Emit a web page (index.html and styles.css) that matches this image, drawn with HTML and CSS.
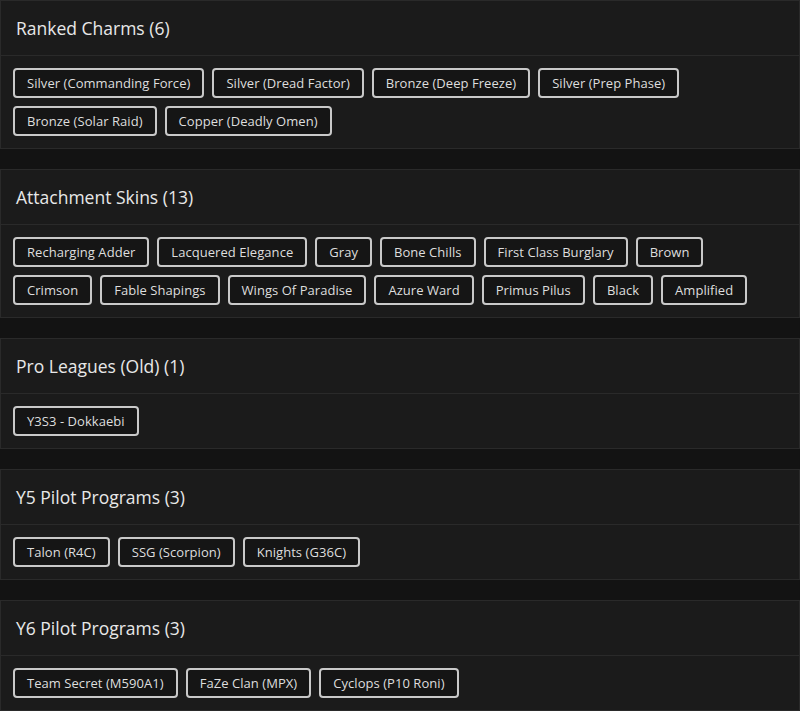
FILE: index.html
```html
<!DOCTYPE html>
<html lang="en">
<head>
<meta charset="utf-8">
<title>Collection</title>
<link rel="stylesheet" href="styles.css">
</head>
<body>
<div class="list">
  <section class="card">
    <h2 class="card-title">Ranked Charms (6)</h2>
    <div class="card-body">
      <span class="tag">Silver (Commanding Force)</span>
      <span class="tag">Silver (Dread Factor)</span>
      <span class="tag">Bronze (Deep Freeze)</span>
      <span class="tag">Silver (Prep Phase)</span>
      <span class="tag">Bronze (Solar Raid)</span>
      <span class="tag">Copper (Deadly Omen)</span>
    </div>
  </section>
  <section class="card">
    <h2 class="card-title">Attachment Skins (13)</h2>
    <div class="card-body">
      <span class="tag">Recharging Adder</span>
      <span class="tag">Lacquered Elegance</span>
      <span class="tag">Gray</span>
      <span class="tag">Bone Chills</span>
      <span class="tag">First Class Burglary</span>
      <span class="tag">Brown</span>
      <span class="tag">Crimson</span>
      <span class="tag">Fable Shapings</span>
      <span class="tag">Wings Of Paradise</span>
      <span class="tag">Azure Ward</span>
      <span class="tag">Primus Pilus</span>
      <span class="tag">Black</span>
      <span class="tag">Amplified</span>
    </div>
  </section>
  <section class="card">
    <h2 class="card-title">Pro Leagues (Old) (1)</h2>
    <div class="card-body">
      <span class="tag">Y3S3 - Dokkaebi</span>
    </div>
  </section>
  <section class="card">
    <h2 class="card-title">Y5 Pilot Programs (3)</h2>
    <div class="card-body">
      <span class="tag">Talon (R4C)</span>
      <span class="tag">SSG (Scorpion)</span>
      <span class="tag">Knights (G36C)</span>
    </div>
  </section>
  <section class="card">
    <h2 class="card-title">Y6 Pilot Programs (3)</h2>
    <div class="card-body">
      <span class="tag">Team Secret (M590A1)</span>
      <span class="tag">FaZe Clan (MPX)</span>
      <span class="tag">Cyclops (P10 Roni)</span>
    </div>
  </section>
</div>
</body>
</html>
```

FILE: styles.css
```css
html, body {
  margin: 0;
  padding: 0;
  background: #131313;
}
body {
  font-family: "Open Sans", "DejaVu Sans", sans-serif;
  color: #e2e2e2;
}
.list {
  display: flex;
  flex-direction: column;
  gap: 20px;
}
.card {
  background: #1b1b1b;
  border: 1px solid #2a2a2a;
}
.card-title {
  margin: 0;
  height: 55px;
  box-sizing: border-box;
  padding: 0 15px;
  display: flex;
  align-items: center;
  font-size: 17.5px;
  font-weight: 500;
  color: #e8e8e8;
  border-bottom: 1px solid #2a2a2a;
}
.card-body {
  padding: 12px;
  display: flex;
  flex-wrap: wrap;
  gap: 8px;
}
.tag {
  display: inline-flex;
  align-items: center;
  height: 30px;
  box-sizing: border-box;
  padding: 0 12px;
  border: 2px solid #c9c9c9;
  border-radius: 4px;
  background: #151515;
  font-size: 13px;
  letter-spacing: 0.05px;
  color: #dedede;
  white-space: nowrap;
}
```
